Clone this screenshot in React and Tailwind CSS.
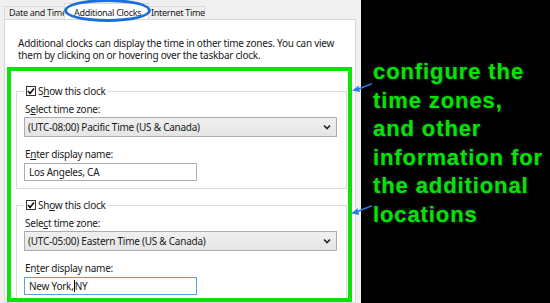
import React from 'react';

function CheckBox() {
  return (
    <svg width="10" height="10" viewBox="0 0 10 10" className="shrink-0">
      <rect x="0.5" y="0.5" width="9" height="9" fill="#fff" stroke="#333" />
      <polyline points="2,5 4,7.5 8,2.5" fill="none" stroke="#111" strokeWidth="1.6" />
    </svg>
  );
}

function Chevron() {
  return (
    <svg width="8" height="6" viewBox="0 0 8 6">
      <polyline points="1,1.5 4,4.5 7,1.5" fill="none" stroke="#222" strokeWidth="1.6" />
    </svg>
  );
}

function Ul({ children }) {
  return <span className="underline underline-offset-[1px]">{children}</span>;
}

function ClockGroup({ show, select, enter, zone, name, focused, className }) {
  return (
    <fieldset className={`ml-[5px] w-[331px] border border-[#dcdcdc] pl-[7px] pb-[7px] ${className}`}>
      <legend className="px-[2px] h-[12px] flex items-center gap-[2px]">
        <CheckBox />
        <span>{show}</span>
      </legend>
      <div className="mt-[6px] h-[12px] leading-[12px] pl-[1px]">{select}</div>
      <div className="mt-[2px] w-[313px] h-[20px] border border-[#acacac] bg-gradient-to-b from-[#f0f0f0] to-[#e5e5e5] flex items-center justify-between pl-[3px] pr-[5px]">
        <span>{zone}</span>
        <Chevron />
      </div>
      <div className="mt-[11px] h-[12px] leading-[12px] pl-[1px]">{enter}</div>
      <div className={`mt-[3px] w-[173px] h-[18px] border bg-white flex items-center pl-[4px] ${focused ? 'border-[#5a9fe6]' : 'border-[#abadb3]'}`}>
        {name}
      </div>
    </fieldset>
  );
}

export default function App() {
  return (
    <div className="w-[550px] h-[303px] flex overflow-hidden relative font-['Noto_Sans',sans-serif] text-[10px] tracking-[-0.25px] text-[#1a1a1a]">
      <div className="w-[361px] shrink-0 bg-[#f0f0f0] pt-[3px] pl-[4px] flex flex-col">
        {/* tabs */}
        <div className="flex items-end h-[16px] leading-[12px] text-[9px] tracking-[-0.3px]">
          <div className="w-[60px] h-[13px] pl-[4px] border border-b-0 border-r-0 border-[#d9d9d9] bg-[#f0f0f0] whitespace-nowrap">Date and Time</div>
          <div className="w-[85px] h-[16px] pt-[3px] pl-[9px] border border-b-0 border-[#d9d9d9] bg-white whitespace-nowrap">Additional Clocks</div>
          <div className="w-[56px] h-[13px] pl-[2px] border border-b-0 border-l-0 border-[#d9d9d9] bg-[#f0f0f0] whitespace-nowrap">Internet Time</div>
        </div>
        {/* panel */}
        <div className="w-[352px] flex-1 bg-white border border-[#d9d9d9]">
          <p className="pl-[13px] pt-[17px] leading-[12px]">
            Additional clocks can display the time in other time zones. You can view<br />
            them by clicking on or hovering over the taskbar clock.
          </p>
          <div className="ml-[2px] mt-[6px] w-[345px] h-[235px] border-4 border-[#0ee10e] overflow-hidden">
            <ClockGroup
              className="mt-[14px]"
              show={<>S<Ul>h</Ul>ow this clock</>}
              select={<>S<Ul>e</Ul>lect time zone:</>}
              enter={<>E<Ul>n</Ul>ter display name:</>}
              zone="(UTC-08:00) Pacific Time (US & Canada)"
              name="Los Angeles, CA"
            />
            <ClockGroup
              className="mt-[10px]"
              show={<>Sh<Ul>o</Ul>w this clock</>}
              select={<>Sele<Ul>c</Ul>t time zone:</>}
              enter={<>En<Ul>t</Ul>er display name:</>}
              zone="(UTC-05:00) Eastern Time (US & Canada)"
              name={<>New York,<span className="inline-block w-[1px] h-[12px] bg-black" />NY</>}
              focused
            />
          </div>
        </div>
      </div>

      {/* annotation */}
      <div className="flex-1 bg-black pl-[12px] pt-[58px]">
        <p className="font-['Liberation_Sans',Arial,sans-serif] font-bold text-[22px] leading-[28.6px] tracking-[0.9px] text-[#00e600] [text-shadow:1px_1px_2px_#333,-1px_-1px_2px_#222]">
          configure the<br />
          time zones,<br />
          and other<br />
          information for<br />
          the additional<br />
          locations
        </p>
      </div>

      {/* overlays */}
      <div className="absolute left-[64px] top-[-1px] w-[87px] h-[23px] border-[3px] border-[#1b6fdc] rounded-[50%]" />
      <svg className="absolute left-[350px] top-[81px]" width="24" height="12" viewBox="0 0 24 12">
        <polygon points="2,9.5 9,4.5 8.5,7 22,2 22,3.5 9.5,8.5 10,11" fill="#2b7de3" />
      </svg>
      <svg className="absolute left-[349px] top-[203px]" width="24" height="13" viewBox="0 0 24 13">
        <polygon points="2,10.5 9,5 8.5,7.5 23,2 23,3.5 9.5,9 10,12" fill="#2b7de3" />
      </svg>
    </div>
  );
}
